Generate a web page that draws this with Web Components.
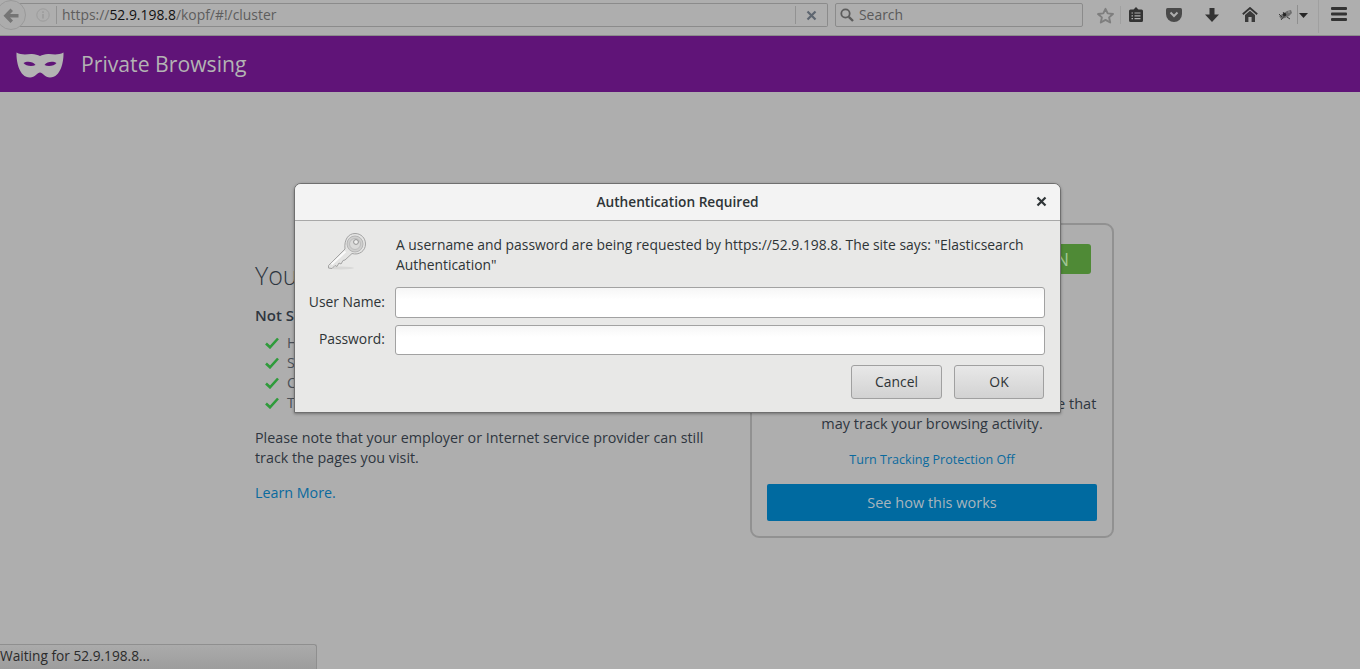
<!DOCTYPE html>
<html>
<head>
<meta charset="utf-8">
<title>Private Browsing</title>
<style>
    html, body { margin: 0; height: 100%; overflow: hidden; }
    body { font-family: "Open Sans", "Noto Sans", sans-serif; background: #aeaeae; }
    app-window { height: 669px; }
</style>
</head>
<body>
<app-window>
    <browser-toolbar></browser-toolbar>
    <private-banner></private-banner>
    <private-page>
        <private-intro></private-intro>
        <tracking-card></tracking-card>
    </private-page>
    <status-panel>Waiting for 52.9.198.8...</status-panel>
    <auth-dialog></auth-dialog>
</app-window>

<script>
const FONT = '"Open Sans", "Noto Sans", sans-serif';

class AppWindow extends HTMLElement {
    constructor() {
        super();
        this.attachShadow({ mode: 'open' });
        this.shadowRoot.innerHTML = `
            <style>
                :host { display: flex; flex-direction: column; position: relative; width: 1360px; overflow: hidden; }
            </style>
            <slot></slot>
        `;
    }
}

const toolbarTemplate = document.createElement('template');
toolbarTemplate.innerHTML = `
    <style>
        :host {
            display: flex; align-items: flex-start; height: 36px; flex: none; box-sizing: border-box;
            padding-top: 3px; background: #aeaeae; border-bottom: 1px solid #8c8c8c; position: relative;
            font: 13.9px ${FONT}; color: #555;
        }
        .back {
            position: absolute; left: -4px; top: 0; width: 30px; height: 30px; box-sizing: border-box;
            border: 1px solid #9a9a9a; border-radius: 50%; background: #acacac;
            display: flex; align-items: center; justify-content: center;
        }
        .url {
            margin-left: 14px; width: 814px; height: 24px; box-sizing: border-box;
            border: 1px solid #8b8b8b; border-left: none; border-radius: 0 2px 2px 0;
            display: flex; align-items: center;
        }
        .info { margin-left: 22px; width: 14px; height: 14px; flex: none; }
        .sep { width: 1px; height: 18px; background: #929292; flex: none; }
        .addr { margin: -2px 0 0 5px; flex: 1; white-space: nowrap; color: #5d5d5d; }
        .addr b { font-weight: normal; color: #111; }
        .stop { width: 31px; display: flex; justify-content: center; flex: none; }
        .search {
            margin-left: 7px; width: 248px; height: 24px; box-sizing: border-box;
            border: 1px solid #8b8b8b; border-radius: 2px; display: flex; align-items: center; gap: 4px;
            padding-left: 3px; color: #5a5a5a;
        }
        .search span { margin-top: -2px; }
        .icons { flex: 1; position: relative; align-self: stretch; margin-top: -3px; }
        svg { display: block; }
        .icons svg, .icons i { position: absolute; }
        .icons i { width: 1px; background: #a0a0a0; }
    </style>
    <div class="back">
        <svg width="16" height="15" viewBox="0 0 16 15"><path d="M7.5 0.5 L10 3 L7 6 H15.5 V9.5 H7 L10 12.5 L7.5 15 L0.5 7.7 Z" fill="#757575"/></svg>
    </div>
    <div class="url">
        <svg class="info" viewBox="0 0 14 14"><circle cx="7" cy="7" r="6.2" fill="none" stroke="#9c9c9c" stroke-width="1"/><rect x="6.2" y="6" width="1.6" height="4.5" fill="#9c9c9c"/><rect x="6.2" y="3.3" width="1.6" height="1.6" fill="#9c9c9c"/></svg>
        <span class="sep" style="margin-left:6px"></span>
        <span class="addr">https://<b>52.9.198.8</b>/kopf/#!/cluster</span>
        <span class="sep"></span>
        <span class="stop"><svg width="11" height="11" viewBox="0 0 11 11"><path d="M1.5 1.5 L9.5 9.5 M9.5 1.5 L1.5 9.5" stroke="#5e6670" stroke-width="2.2"/></svg></span>
    </div>
    <div class="search">
        <svg width="16" height="16" viewBox="0 0 16 16"><circle cx="6.5" cy="6.5" r="4.2" fill="none" stroke="#5c5c5c" stroke-width="1.8"/><path d="M9.8 9.8 L14 14" stroke="#5c5c5c" stroke-width="2.4"/></svg>
        <span>Search</span>
    </div>
    <div class="icons">
        <svg style="left:13px;top:7px" width="19" height="17" viewBox="0 0 19 17"><path d="M9.5 1.8 L11.7 6.4 L17 7 L13.1 10.4 L14.2 15.5 L9.5 12.9 L4.8 15.5 L5.9 10.4 L2 7 L7.3 6.4 Z" fill="none" stroke="#7e7e7e" stroke-width="1.9" stroke-linejoin="round"/></svg>
        <i style="left:37px;top:6px;height:18px"></i>
        <svg style="left:46px;top:7px" width="14" height="15" viewBox="0 0 14 15"><path d="M1.5 2.5 H4.5 L7 0 L9.5 2.5 H12.5 Q14 2.5 14 4 V13.5 Q14 15 12.5 15 H1.5 Q0 15 0 13.5 V4 Q0 2.5 1.5 2.5 Z" fill="#333"/><path d="M2.5 6 H4 M5.5 6 H11.5 M2.5 8.8 H4 M5.5 8.8 H11.5 M2.5 11.6 H4 M5.5 11.6 H11.5" stroke="#aeaeae" stroke-width="1.2"/></svg>
        <svg style="left:83px;top:8px" width="16" height="14" viewBox="0 0 16 14"><path d="M1.5 0 H14.5 Q16 0 16 1.5 V6 A8 8 0 0 1 0 6 V1.5 Q0 0 1.5 0 Z" fill="#4a4a4a"/><path d="M4.5 4.5 L8 8 L11.5 4.5" fill="none" stroke="#aeaeae" stroke-width="2"/></svg>
        <svg style="left:122px;top:8px" width="14" height="14" viewBox="0 0 14 14"><path d="M4.5 0 H9.5 V6.5 H14 L7 14 L0 6.5 H4.5 Z" fill="#333"/></svg>
        <svg style="left:159px;top:7px" width="16" height="15" viewBox="0 0 16 15"><path d="M0.8 7.2 L8 1 L15.2 7.2" fill="none" stroke="#333" stroke-width="1.8"/><path d="M3 8 L8 3.8 L13 8 V15 H9.6 V10 H6.4 V15 H3 Z" fill="#3a3a3a"/></svg>
        <svg style="left:195px;top:9px" width="15" height="12" viewBox="0 0 15 12"><path d="M1 7 L6 4 L9 2 L13 1 L14 4 L11 7 L7 9 L3 10 Z" fill="#6e6e6e"/><path d="M1 5 L4 8 M5 3 L8 7 M3 11 L8 5 M9 8 L12 10" stroke="#3d3d3d" stroke-width="1"/><circle cx="6.5" cy="5.5" r="1.7" fill="#262626"/><circle cx="11" cy="3" r="1" fill="#8c8c8c"/></svg>
        <i style="left:214px;top:5px;height:19px;background:#8f8f8f"></i>
        <svg style="left:216px;top:13px" width="9" height="5" viewBox="0 0 9 5"><path d="M0 0 H9 L4.5 5 Z" fill="#262626"/></svg>
        <i style="left:235px;top:0;height:33px"></i>
        <svg style="left:248px;top:7px" width="16" height="14" viewBox="0 0 16 14"><path d="M1 0 H15 Q16 0 16 1 V2 Q16 3 15 3 H1 Q0 3 0 2 V1 Q0 0 1 0 Z M1 5.5 H15 Q16 5.5 16 6.5 V7.5 Q16 8.5 15 8.5 H1 Q0 8.5 0 7.5 V6.5 Q0 5.5 1 5.5 Z M1 11 H15 Q16 11 16 12 V13 Q16 14 15 14 H1 Q0 14 0 13 V12 Q0 11 1 11 Z" fill="#333"/></svg>
    </div>
`;
class BrowserToolbar extends HTMLElement {
    constructor() {
        super();
        this.attachShadow({ mode: 'open' });
        this.shadowRoot.appendChild(toolbarTemplate.content.cloneNode(true));
    }
}

class PrivateBanner extends HTMLElement {
    constructor() {
        super();
        this.attachShadow({ mode: 'open' });
        this.shadowRoot.innerHTML = `
            <style>
                :host {
                    display: flex; align-items: center; flex: none; height: 56px; box-sizing: border-box;
                    background: #601478; color: #b3b3b3; padding-left: 16px; gap: 17px;
                    font: 21.2px ${FONT};
                }
                span { margin-top: -2px; }
            </style>
            <svg width="48" height="27" viewBox="0 0 48 27">
                <path fill-rule="evenodd" fill="#b3b3b3" d="M0.5 1.5 C5 4 10 3.5 15 3 C19 2.8 21.5 4 24 5 C26.5 4 29 2.8 33 3 C38 3.5 43 4 47.5 1.5 C47.8 10 45 26.5 34 26.5 C29 26.5 26.5 21.5 24 21.5 C21.5 21.5 19 26.5 14 26.5 C3 26.5 0.2 10 0.5 1.5 Z M7.5 12 C9.5 15 16 16 19.5 14 C17 10.5 11 9.8 7.5 12 Z M40.5 12 C38.5 15 32 16 28.5 14 C31 10.5 37 9.8 40.5 12 Z"/>
            </svg>
            <span>Private Browsing</span>
        `;
    }
}

class PrivatePage extends HTMLElement {
    constructor() {
        super();
        this.attachShadow({ mode: 'open' });
        this.shadowRoot.innerHTML = `
            <style>
                :host {
                    display: flex; flex: 1; align-items: flex-start; box-sizing: border-box;
                    padding: 131px 0 0 255px; gap: 19px; background: #aeaeae;
                }
            </style>
            <slot></slot>
        `;
    }
}

const introTemplate = document.createElement('template');
introTemplate.innerHTML = `
    <style>
        :host { display: block; width: 476px; font: 14.3px/20px ${FONT}; color: #2e3640; padding-top: 35px; }
        h1 { font: 300 25px/34px ${FONT}; margin: 0 0 13px; color: #2e3640; }
        h2 { font: 600 15px/20px ${FONT}; margin: 0 0 8px; }
        ul { list-style: none; margin: 0 0 15px; padding: 0 0 0 10px; }
        li { display: flex; align-items: center; gap: 8px; height: 20px; color: #4a4f57; }
        p { margin: 0 0 15px; }
        a { color: #0a6a9e; text-decoration: none; }
    </style>
    <h1>You're browsing privately</h1>
    <h2>Not Saved</h2>
    <ul>
        <li><svg width="14" height="12" viewBox="0 0 14 12"><path d="M1 6.5 L5 10.3 L13 1.5" fill="none" stroke="#2f9b3b" stroke-width="2.6"/></svg><span>History</span></li>
        <li><svg width="14" height="12" viewBox="0 0 14 12"><path d="M1 6.5 L5 10.3 L13 1.5" fill="none" stroke="#2f9b3b" stroke-width="2.6"/></svg><span>Searches</span></li>
        <li><svg width="14" height="12" viewBox="0 0 14 12"><path d="M1 6.5 L5 10.3 L13 1.5" fill="none" stroke="#2f9b3b" stroke-width="2.6"/></svg><span>Cookies</span></li>
        <li><svg width="14" height="12" viewBox="0 0 14 12"><path d="M1 6.5 L5 10.3 L13 1.5" fill="none" stroke="#2f9b3b" stroke-width="2.6"/></svg><span>Temporary files</span></li>
    </ul>
    <p>Please note that your employer or Internet service provider can still<br>track the pages you visit.</p>
    <a href="#">Learn More.</a>
`;
class PrivateIntro extends HTMLElement {
    constructor() {
        super();
        this.attachShadow({ mode: 'open' });
        this.shadowRoot.appendChild(introTemplate.content.cloneNode(true));
    }
}

class TrackingCard extends HTMLElement {
    constructor() {
        super();
        this.attachShadow({ mode: 'open' });
        this.shadowRoot.innerHTML = `
            <style>
                :host {
                    display: flex; flex-direction: column; align-items: center; box-sizing: border-box;
                    width: 364px; height: 315px; border: 2px solid #919191; border-radius: 9px;
                    padding: 0 15px; font: 14.5px/20px ${FONT}; color: #2e3640; text-align: center;
                }
                .badge {
                    align-self: flex-end; margin-top: 19px; margin-right: 6px; height: 30px; width: 60px; box-sizing: border-box;
                    background: #4f8a36; color: #a3c596; border-radius: 3px; font: 18px/30px ${FONT}; text-align: right; padding-right: 22px;
                }
                .msg { margin-top: 120px; white-space: nowrap; }
                a { margin-top: 16px; font-size: 12.55px; color: #0a6a9e; text-decoration: none; }
                .btn {
                    margin-top: 14px; width: 330px; height: 37px; background: #006aa0; color: #a8b5bd;
                    border-radius: 2px; line-height: 37px;
                }
            </style>
            <div class="badge">ON</div>
            <div class="msg">Private Browsing will block parts of the page that<br>may track your browsing activity.</div>
            <a href="#">Turn Tracking Protection Off</a>
            <div class="btn">See how this works</div>
        `;
    }
}

class StatusPanel extends HTMLElement {
    constructor() {
        super();
        this.attachShadow({ mode: 'open' });
        this.shadowRoot.innerHTML = `
            <style>
                :host {
                    position: absolute; left: -1px; bottom: 0; width: 318px; height: 25px; box-sizing: border-box;
                    border: 1px solid #8f8f8f; border-bottom: none; border-radius: 0 3px 0 0;
                    background: linear-gradient(#ababab, #9d9d9d); color: #2b2b2b;
                    font: 13.7px/22px ${FONT}; white-space: nowrap;
                }
            </style>
            <slot></slot>
        `;
    }
}

const dialogTemplate = document.createElement('template');
dialogTemplate.innerHTML = `
    <style>
        :host {
            position: absolute; left: 294px; top: 183px; width: 767px; height: 230px; box-sizing: border-box;
            display: flex; flex-direction: column; background: #e8e8e7;
            border: 1px solid #6f6f6f; border-radius: 7px 7px 0 0;
            box-shadow: 0 1px 3px rgba(0,0,0,.35);
            font: 13.87px/20px ${FONT}; color: #2e3436;
        }
        header {
            flex: none; height: 37px; box-sizing: border-box; background: #f3f3f3; border-bottom: 1px solid #a8a8a8;
            border-radius: 6px 6px 0 0; display: flex; align-items: center; justify-content: center;
            font-weight: 600; font-size: 13.7px; padding-bottom: 1px; position: relative;
        }
        .close { position: absolute; right: 13px; top: 12px; display: block; }
        .body { flex: 1; padding: 14px 15px 0 0; }
        .message { display: grid; grid-template-columns: 101px 1fr; height: 52px; }
        .key { margin-left: 32px; margin-top: -3px; display: block; }
        .msg { white-space: nowrap; }
        .row { display: grid; grid-template-columns: 90px 1fr; column-gap: 10px; align-items: center; height: 31px; margin-bottom: 7px; }
        .row + .row { height: 30px; margin-bottom: 0; }
        label { text-align: right; margin-top: -2px; }
        .input {
            height: 100%; box-sizing: border-box; border: 1px solid #a2a2a2; border-radius: 3px;
            background: linear-gradient(#f6f6f6, #ffffff 40%);
        }
        .buttons { display: flex; justify-content: flex-end; gap: 12px; margin-top: 10px; padding-right: 1px; }
        button {
            width: 91px; height: 34px; box-sizing: border-box; border: 1px solid #a0a0a0; border-radius: 3px;
            background: linear-gradient(#e8e8e8, #d2d2d2); font: inherit; color: #2e3436; padding: 0;
        }
        button + button { width: 90px; }
    </style>
    <header>
        Authentication Required
        <svg class="close" width="11" height="11" viewBox="0 0 11 11"><path d="M1.5 1.5 L9.5 9.5 M9.5 1.5 L1.5 9.5" stroke="#2e3436" stroke-width="2.2"/></svg>
    </header>
    <div class="body">
        <div class="message">
            <svg class="key" width="40" height="38" viewBox="0 0 40 38">
                <ellipse cx="14" cy="36" rx="13" ry="1.5" fill="#d8d8d7"/>
                <path d="M18 17 C17 8 21 1.5 28 1.5 C34 1.5 38.5 6 38.5 12 C38.5 19 32 23.5 25 21.5 L18 28 L16 28.5 L14 32 L12 31 L10 34.5 L8 33.5 L5 36.5 L1.5 36 L1.5 33.5 Z" fill="#e4e4e3" stroke="#a3a3a3" stroke-width="1"/>
                <circle cx="28" cy="12" r="8" fill="#cfcfce" stroke="#b5b5b5"/>
                <circle cx="28" cy="12" r="5.5" fill="#dadad9" stroke="#bcbcbc"/>
                <circle cx="29" cy="10" r="2.4" fill="#efefee" stroke="#929292"/>
                <path d="M4.5 32.5 L18.5 19.5" stroke="#fafafa" stroke-width="2"/>
            </svg>
            <div class="msg">A username and password are being requested by https://52.9.198.8. The site says: "Elasticsearch<br>Authentication"</div>
        </div>
        <div class="row"><label>User Name:</label><div class="input"></div></div>
        <div class="row"><label>Password:</label><div class="input"></div></div>
        <div class="buttons"><button>Cancel</button><button>OK</button></div>
    </div>
`;
class AuthDialog extends HTMLElement {
    constructor() {
        super();
        this.attachShadow({ mode: 'open' });
        this.shadowRoot.appendChild(dialogTemplate.content.cloneNode(true));
    }
}

window.customElements.define('app-window', AppWindow);
window.customElements.define('browser-toolbar', BrowserToolbar);
window.customElements.define('private-banner', PrivateBanner);
window.customElements.define('private-page', PrivatePage);
window.customElements.define('private-intro', PrivateIntro);
window.customElements.define('tracking-card', TrackingCard);
window.customElements.define('status-panel', StatusPanel);
window.customElements.define('auth-dialog', AuthDialog);
</script>
</body>
</html>
